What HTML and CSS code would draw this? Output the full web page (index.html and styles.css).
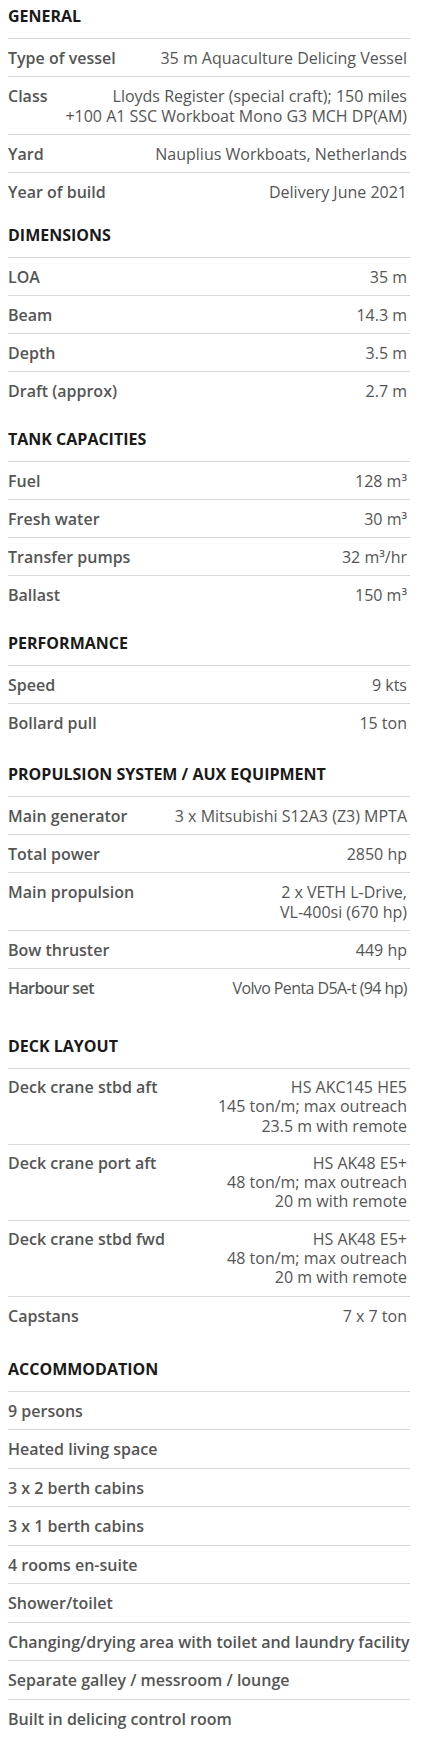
FILE: index.html
```html
<!DOCTYPE html>
<html lang="en">
<head>
  <meta charset="UTF-8">
  <meta name="viewport" content="width=device-width, initial-scale=1.0">
  <title>Specifications</title>
  <link rel="stylesheet" href="styles.css">
</head>
<body>
  <div class="specs">

    <div class="section">
      <h2 class="section-title">GENERAL</h2>
      <div class="row"><span class="label">Type of vessel</span><span class="value">35 m Aquaculture Delicing Vessel</span></div>
      <div class="row"><span class="label">Class</span><span class="value">Lloyds Register (special craft); 150 miles<br>+100 A1 SSC Workboat Mono G3 MCH DP(AM)</span></div>
      <div class="row"><span class="label">Yard</span><span class="value">Nauplius Workboats, Netherlands</span></div>
      <div class="row"><span class="label">Year of build</span><span class="value">Delivery June 2021</span></div>
    </div>

    <div class="section gap-15">
      <h2 class="section-title">DIMENSIONS</h2>
      <div class="row"><span class="label">LOA</span><span class="value">35 m</span></div>
      <div class="row"><span class="label">Beam</span><span class="value">14.3 m</span></div>
      <div class="row"><span class="label">Depth</span><span class="value">3.5 m</span></div>
      <div class="row"><span class="label">Draft (approx)</span><span class="value">2.7 m</span></div>
    </div>

    <div class="section gap-20">
      <h2 class="section-title">TANK CAPACITIES</h2>
      <div class="row"><span class="label">Fuel</span><span class="value">128 m³</span></div>
      <div class="row"><span class="label">Fresh water</span><span class="value">30 m³</span></div>
      <div class="row"><span class="label">Transfer pumps</span><span class="value">32 m³/hr</span></div>
      <div class="row"><span class="label">Ballast</span><span class="value">150 m³</span></div>
    </div>

    <div class="section gap-20">
      <h2 class="section-title">PERFORMANCE</h2>
      <div class="row"><span class="label">Speed</span><span class="value">9 kts</span></div>
      <div class="row"><span class="label">Bollard pull</span><span class="value">15 ton</span></div>
    </div>

    <div class="section gap-23">
      <h2 class="section-title">PROPULSION SYSTEM / AUX EQUIPMENT</h2>
      <div class="row"><span class="label">Main generator</span><span class="value">3 x Mitsubishi S12A3 (Z3) MPTA</span></div>
      <div class="row"><span class="label">Total power</span><span class="value">2850 hp</span></div>
      <div class="row"><span class="label">Main propulsion</span><span class="value">2 x VETH L-Drive,<br>VL-400si (670 hp)</span></div>
      <div class="row"><span class="label">Bow thruster</span><span class="value">449 hp</span></div>
      <div class="row narrow"><span class="label">Harbour set</span><span class="value">Volvo Penta D5A-t (94 hp)</span></div>
    </div>

    <div class="section gap-30">
      <h2 class="section-title">DECK LAYOUT</h2>
      <div class="row stack"><span class="label">Deck crane stbd aft</span><span class="value">HS AKC145 HE5<br>145 ton/m; max outreach<br>23.5 m with remote</span></div>
      <div class="row stack"><span class="label">Deck crane port aft</span><span class="value">HS AK48 E5+<br>48 ton/m; max outreach<br>20 m with remote</span></div>
      <div class="row stack"><span class="label">Deck crane stbd fwd</span><span class="value">HS AK48 E5+<br>48 ton/m; max outreach<br>20 m with remote</span></div>
      <div class="row"><span class="label">Capstans</span><span class="value">7 x 7 ton</span></div>
    </div>

    <div class="section gap-25">
      <h2 class="section-title">ACCOMMODATION</h2>
      <div class="row list"><span class="label">9 persons</span></div>
      <div class="row list"><span class="label">Heated living space</span></div>
      <div class="row list"><span class="label">3 x 2 berth cabins</span></div>
      <div class="row list"><span class="label">3 x 1 berth cabins</span></div>
      <div class="row list"><span class="label">4 rooms en-suite</span></div>
      <div class="row list"><span class="label">Shower/toilet</span></div>
      <div class="row list"><span class="label">Changing/drying area with toilet and laundry facility</span></div>
      <div class="row list"><span class="label">Separate galley / messroom / lounge</span></div>
      <div class="row list"><span class="label">Built in delicing control room</span></div>
    </div>

  </div>
</body>
</html>
```

FILE: styles.css
```css
* {
  box-sizing: border-box;
  padding: 0;
  margin: 0;
}

body {
  font-family: 'Open Sans', 'Liberation Sans', sans-serif;
  font-size: 16px;
  line-height: 20px;
  color: #555;
  background-color: #fff;
}

.specs {
  padding: 6px 18px 20px 8px;
}

.section-title {
  font-size: 16px;
  font-weight: 700;
  line-height: 20px;
  color: #1a1a1a;
  padding-bottom: 12px;
}

.gap-15 { margin-top: 15px; }
.gap-20 { margin-top: 20px; }
.gap-23 { margin-top: 23px; }
.gap-25 { margin-top: 25px; }
.gap-30 { margin-top: 30px; }

.row {
  display: flex;
  justify-content: space-between;
  align-items: flex-start;
  padding: 9px 3px 8px 0;
  border-top: 1px solid #d8d8d8;
}

.stack {
  line-height: 19.3px;
}

.list {
  padding-bottom: 8.5px;
}

.label {
  font-weight: 600;
  white-space: nowrap;
}

.value {
  font-weight: 400;
  text-align: right;
}

.narrow .label,
.narrow .value {
  letter-spacing: -0.6px;
}
```
